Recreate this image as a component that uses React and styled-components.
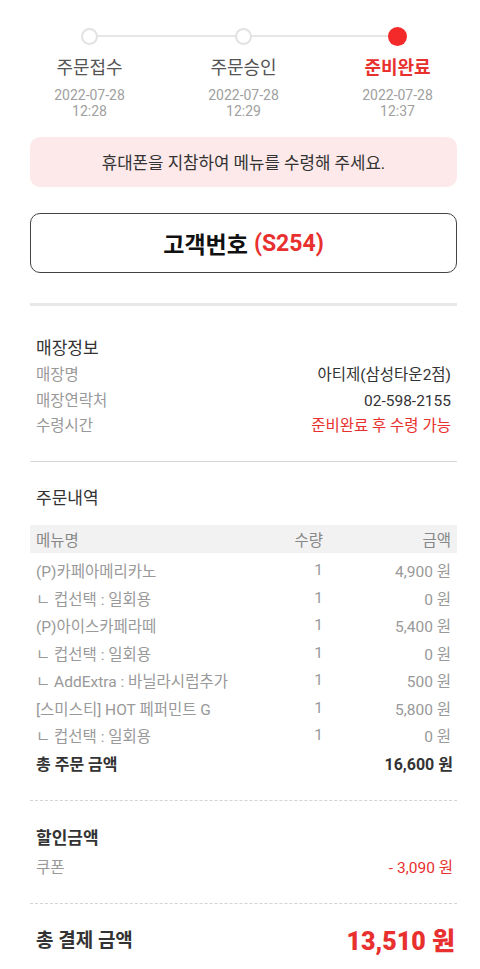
import styled, { createGlobalStyle, css } from "styled-components";

const GlobalStyle = createGlobalStyle`
    body {
        margin: 0;
        background: #fff;
        font-family: Roboto, "Noto Sans CJK KR", sans-serif;
        color: #333;
    }
`;

const RED = "#e8302f";

const Page = styled.div`
    width: 480px;
    padding-bottom: 20px;
`;

const Stepper = styled.div`
    display: grid;
    grid-template-columns: repeat(3, 154px);
    justify-content: center;
    padding: 27px 0 0 7px;
`;

const Step = styled.div`
    display: flex;
    flex-direction: column;
    align-items: center;
    position: relative;
    ${(props) =>
        !props.$first &&
        css`
            &::before {
                content: "";
                position: absolute;
                top: 8px;
                left: -50%;
                right: 50%;
                height: 2px;
                background: #e6e6e6;
            }
        `}
`;

const Dot = styled.div`
    height: 18px;
    display: flex;
    align-items: center;
    justify-content: center;
    position: relative;
    z-index: 1;
    span {
        display: block;
        box-sizing: border-box;
        width: ${(props) => (props.$active ? "19px" : "17px")};
        height: ${(props) => (props.$active ? "19px" : "17px")};
        border-radius: 50%;
        border: ${(props) => (props.$active ? "none" : "2px solid #e2e2e2")};
        background: ${(props) => (props.$active ? "#f42929" : "#fff")};
    }
`;

const StepLabel = styled.div`
    margin-top: 11px;
    font-size: 18px;
    line-height: 24px;
    font-weight: ${(props) => (props.$active ? 700 : 400)};
    color: ${(props) => (props.$active ? RED : "#555")};
`;

const StepDate = styled.div`
    margin-top: 7px;
    font-size: 14px;
    line-height: 16px;
    color: #a0a0a0;
    text-align: center;
`;

const Body = styled.div`
    margin: 0 23px 0 30px;
`;

const Notice = styled.div`
    margin-top: 18px;
    height: 50px;
    border-radius: 10px;
    background: #fde9e9;
    display: flex;
    align-items: center;
    justify-content: center;
    font-size: 16.8px;
    color: #333;
`;

const CustomerBox = styled.div`
    margin-top: 26px;
    height: 60px;
    box-sizing: border-box;
    border: 1px solid #444;
    border-radius: 10px;
    display: flex;
    align-items: center;
    justify-content: center;
    font-size: 23px;
    font-weight: 700;
    color: #111;
    em {
        font-style: normal;
        color: ${RED};
        margin-left: 6px;
    }
`;

const ThickLine = styled.div`
    margin-top: 30px;
    height: 3px;
    background: #e8e8e8;
`;

const Section = styled.div`
    padding: ${(props) => props.$pad || "0"};
    border-bottom: ${(props) =>
        props.$border === "solid"
            ? "1px solid #d8d8d8"
            : props.$border === "dashed"
            ? "1px dashed #d4d4d4"
            : "none"};
`;

const SectionTitle = styled.div`
    padding: 0 6px;
    font-size: 17px;
    font-weight: ${(props) => (props.$bold ? 700 : 400)};
    line-height: 24px;
    color: #333;
`;

const InfoList = styled.div`
    margin-top: ${(props) => props.$gap || "3px"};
    padding: 0 ${(props) => (props.$wide ? "4px" : "6px")} 0 6px;
`;

const InfoRow = styled.div`
    display: flex;
    justify-content: space-between;
    font-size: 15.5px;
    line-height: 25.5px;
    color: #999;
    span:last-child {
        color: ${(props) => (props.$red ? RED : "#333")};
    }
`;

const Table = styled.div`
    margin-top: 15px;
`;

const TableRow = styled.div`
    display: grid;
    grid-template-columns: 1fr 80px 128px;
    padding: 0 6px;
    align-items: center;
    font-size: 15.5px;
    color: #999;
    height: 27.5px;
    span:nth-child(2),
    span:nth-child(3) {
        text-align: right;
    }
`;

const TableHead = styled(TableRow)`
    height: 28px;
    background: #f2f2f2;
    color: #888;
    margin-bottom: 4px;
`;

const TotalRow = styled.div`
    display: flex;
    justify-content: space-between;
    align-items: center;
    height: 28px;
    padding: 0 4px 0 6px;
    font-size: 16px;
    font-weight: 700;
    color: #333;
`;

const PayRow = styled.div`
    display: flex;
    justify-content: space-between;
    align-items: center;
    height: 30px;
    padding: 20px 2px 0 6px;
    font-size: 19px;
    font-weight: 700;
    color: #333;
    strong {
        font-size: 25px;
        color: ${RED};
    }
`;

const steps = [
    { label: "주문접수", date: "2022-07-28", time: "12:28" },
    { label: "주문승인", date: "2022-07-28", time: "12:29" },
    { label: "준비완료", date: "2022-07-28", time: "12:37", active: true },
];

const items = [
    ["(P)카페아메리카노", "1", "4,900 원"],
    ["ㄴ 컵선택 : 일회용", "1", "0 원"],
    ["(P)아이스카페라떼", "1", "5,400 원"],
    ["ㄴ 컵선택 : 일회용", "1", "0 원"],
    ["ㄴ AddExtra : 바닐라시럽추가", "1", "500 원"],
    ["[스미스티] HOT 페퍼민트 G", "1", "5,800 원"],
    ["ㄴ 컵선택 : 일회용", "1", "0 원"],
];

export default function App() {
    return (
        <Page>
            <GlobalStyle />
            <Stepper>
                {steps.map((s, i) => (
                    <Step key={s.label} $first={i === 0}>
                        <Dot $active={s.active}>
                            <span />
                        </Dot>
                        <StepLabel $active={s.active}>{s.label}</StepLabel>
                        <StepDate>
                            {s.date}
                            <br />
                            {s.time}
                        </StepDate>
                    </Step>
                ))}
            </Stepper>
            <Body>
                <Notice>휴대폰을 지참하여 메뉴를 수령해 주세요.</Notice>
                <CustomerBox>
                    고객번호<em>(S254)</em>
                </CustomerBox>
                <ThickLine />
                <Section $pad="30px 0 21px" $border="solid">
                    <SectionTitle>매장정보</SectionTitle>
                    <InfoList>
                        <InfoRow>
                            <span>매장명</span>
                            <span>아티제(삼성타운2점)</span>
                        </InfoRow>
                        <InfoRow>
                            <span>매장연락처</span>
                            <span>02-598-2155</span>
                        </InfoRow>
                        <InfoRow $red>
                            <span>수령시간</span>
                            <span>준비완료 후 수령 가능</span>
                        </InfoRow>
                    </InfoList>
                </Section>
                <Section $pad="24px 0 23px" $border="dashed">
                    <SectionTitle>주문내역</SectionTitle>
                    <Table>
                        <TableHead>
                            <span>메뉴명</span>
                            <span>수량</span>
                            <span>금액</span>
                        </TableHead>
                        {items.map((it, i) => (
                            <TableRow key={i}>
                                <span>{it[0]}</span>
                                <span>{it[1]}</span>
                                <span>{it[2]}</span>
                            </TableRow>
                        ))}
                    </Table>
                    <TotalRow>
                        <span>총 주문 금액</span>
                        <span>16,600 원</span>
                    </TotalRow>
                </Section>
                <Section $pad="25px 0 21px" $border="dashed">
                    <SectionTitle $bold>할인금액</SectionTitle>
                    <InfoList $gap="6px" $wide>
                        <InfoRow $red>
                            <span>쿠폰</span>
                            <span>- 3,090 원</span>
                        </InfoRow>
                    </InfoList>
                </Section>
                <PayRow>
                    <span>총 결제 금액</span>
                    <strong>13,510 원</strong>
                </PayRow>
            </Body>
        </Page>
    );
}
